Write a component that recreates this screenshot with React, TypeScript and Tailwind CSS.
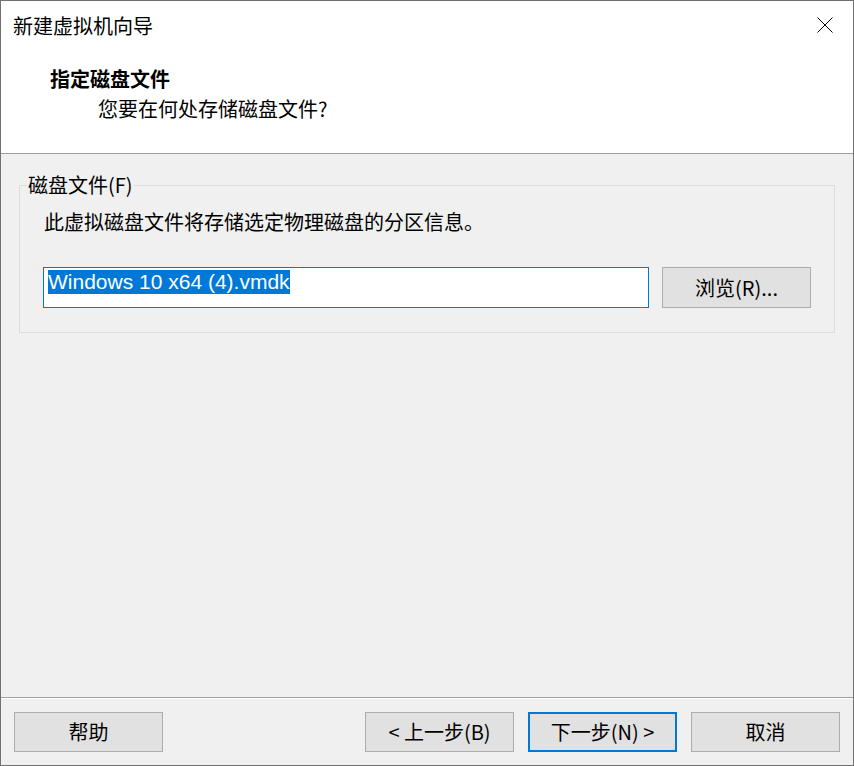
import React from "react";

const font = { fontFamily: '"Noto Sans CJK SC", "Liberation Sans", sans-serif' };

function Btn({ children, primary }: { children: React.ReactNode; primary?: boolean }) {
  return (
    <div
      className={
        "w-[149px] h-[40px] flex items-center justify-center bg-[#e1e1e1] text-[20px] leading-[24px] text-black " +
        (primary ? "border-2 border-[#0078d7]" : "border border-[#adadad]")
      }
    >
      {children}
    </div>
  );
}

export default function App() {
  return (
    <div
      className="w-[854px] h-[766px] border border-[#717171] bg-[#f0f0f0] flex flex-col text-black"
      style={font}
    >
      {/* header */}
      <div className="h-[153px] bg-white border-b border-[#a0a0a0] flex flex-col">
        <div className="flex items-start justify-between pl-[12px] pr-[20px] pt-[15px]">
          <div className="text-[20px] leading-[20px]">新建虚拟机向导</div>
          <svg width="16" height="16" viewBox="0 0 16 16" className="mt-[1px]">
            <path d="M0.5 0.5 L15.5 15.5 M15.5 0.5 L0.5 15.5" stroke="#000" strokeWidth="1" fill="none" />
          </svg>
        </div>
        <div className="pl-[49px] pt-[33px] text-[20px] leading-[20px] font-bold">指定磁盘文件</div>
        <div className="pl-[97px] pt-[10px] text-[20px] leading-[20px]">您要在何处存储磁盘文件?</div>
      </div>

      {/* body */}
      <div className="flex-1 px-[18px] pt-[19px]">
        <fieldset className="w-[816px] h-[160px] border border-[#dcdcdc] px-[23px]">
          <legend className="ml-[-16px] px-[1px] text-[20px] leading-[24px]">磁盘文件(F)</legend>
          <div className="pt-[13px] text-[20px] leading-[24px] ml-[1px]">此虚拟磁盘文件将存储选定物理磁盘的分区信息。</div>
          <div className="flex mt-[33px] gap-[13px]">
            <div className="w-[606px] h-[41px] border border-[#0078d7] bg-white pl-[4px] pt-[2px]">
              <span
                className="inline-block bg-[#0078d7] text-white text-[21px] leading-[24px]"
                style={{ fontFamily: '"Liberation Sans", sans-serif' }}
              >
                Windows 10 x64 (4).vmdk
              </span>
            </div>
            <div className="w-[149px] h-[41px] flex items-center justify-center bg-[#e1e1e1] border border-[#adadad] text-[20px] leading-[24px]">
              浏览(R)...
            </div>
          </div>
        </fieldset>
      </div>

      {/* footer */}
      <div className="h-px bg-[#a0a0a0]" />
      <div className="h-px bg-white" />
      <div className="h-[66px] flex items-start pt-[13px] pl-[13px] pr-[13px]">
        <Btn>帮助</Btn>
        <div className="flex-1" />
        <div className="flex gap-[14px]">
          <Btn>&lt; 上一步(B)</Btn>
          <Btn primary>下一步(N) &gt;</Btn>
          <Btn>取消</Btn>
        </div>
      </div>
    </div>
  );
}
